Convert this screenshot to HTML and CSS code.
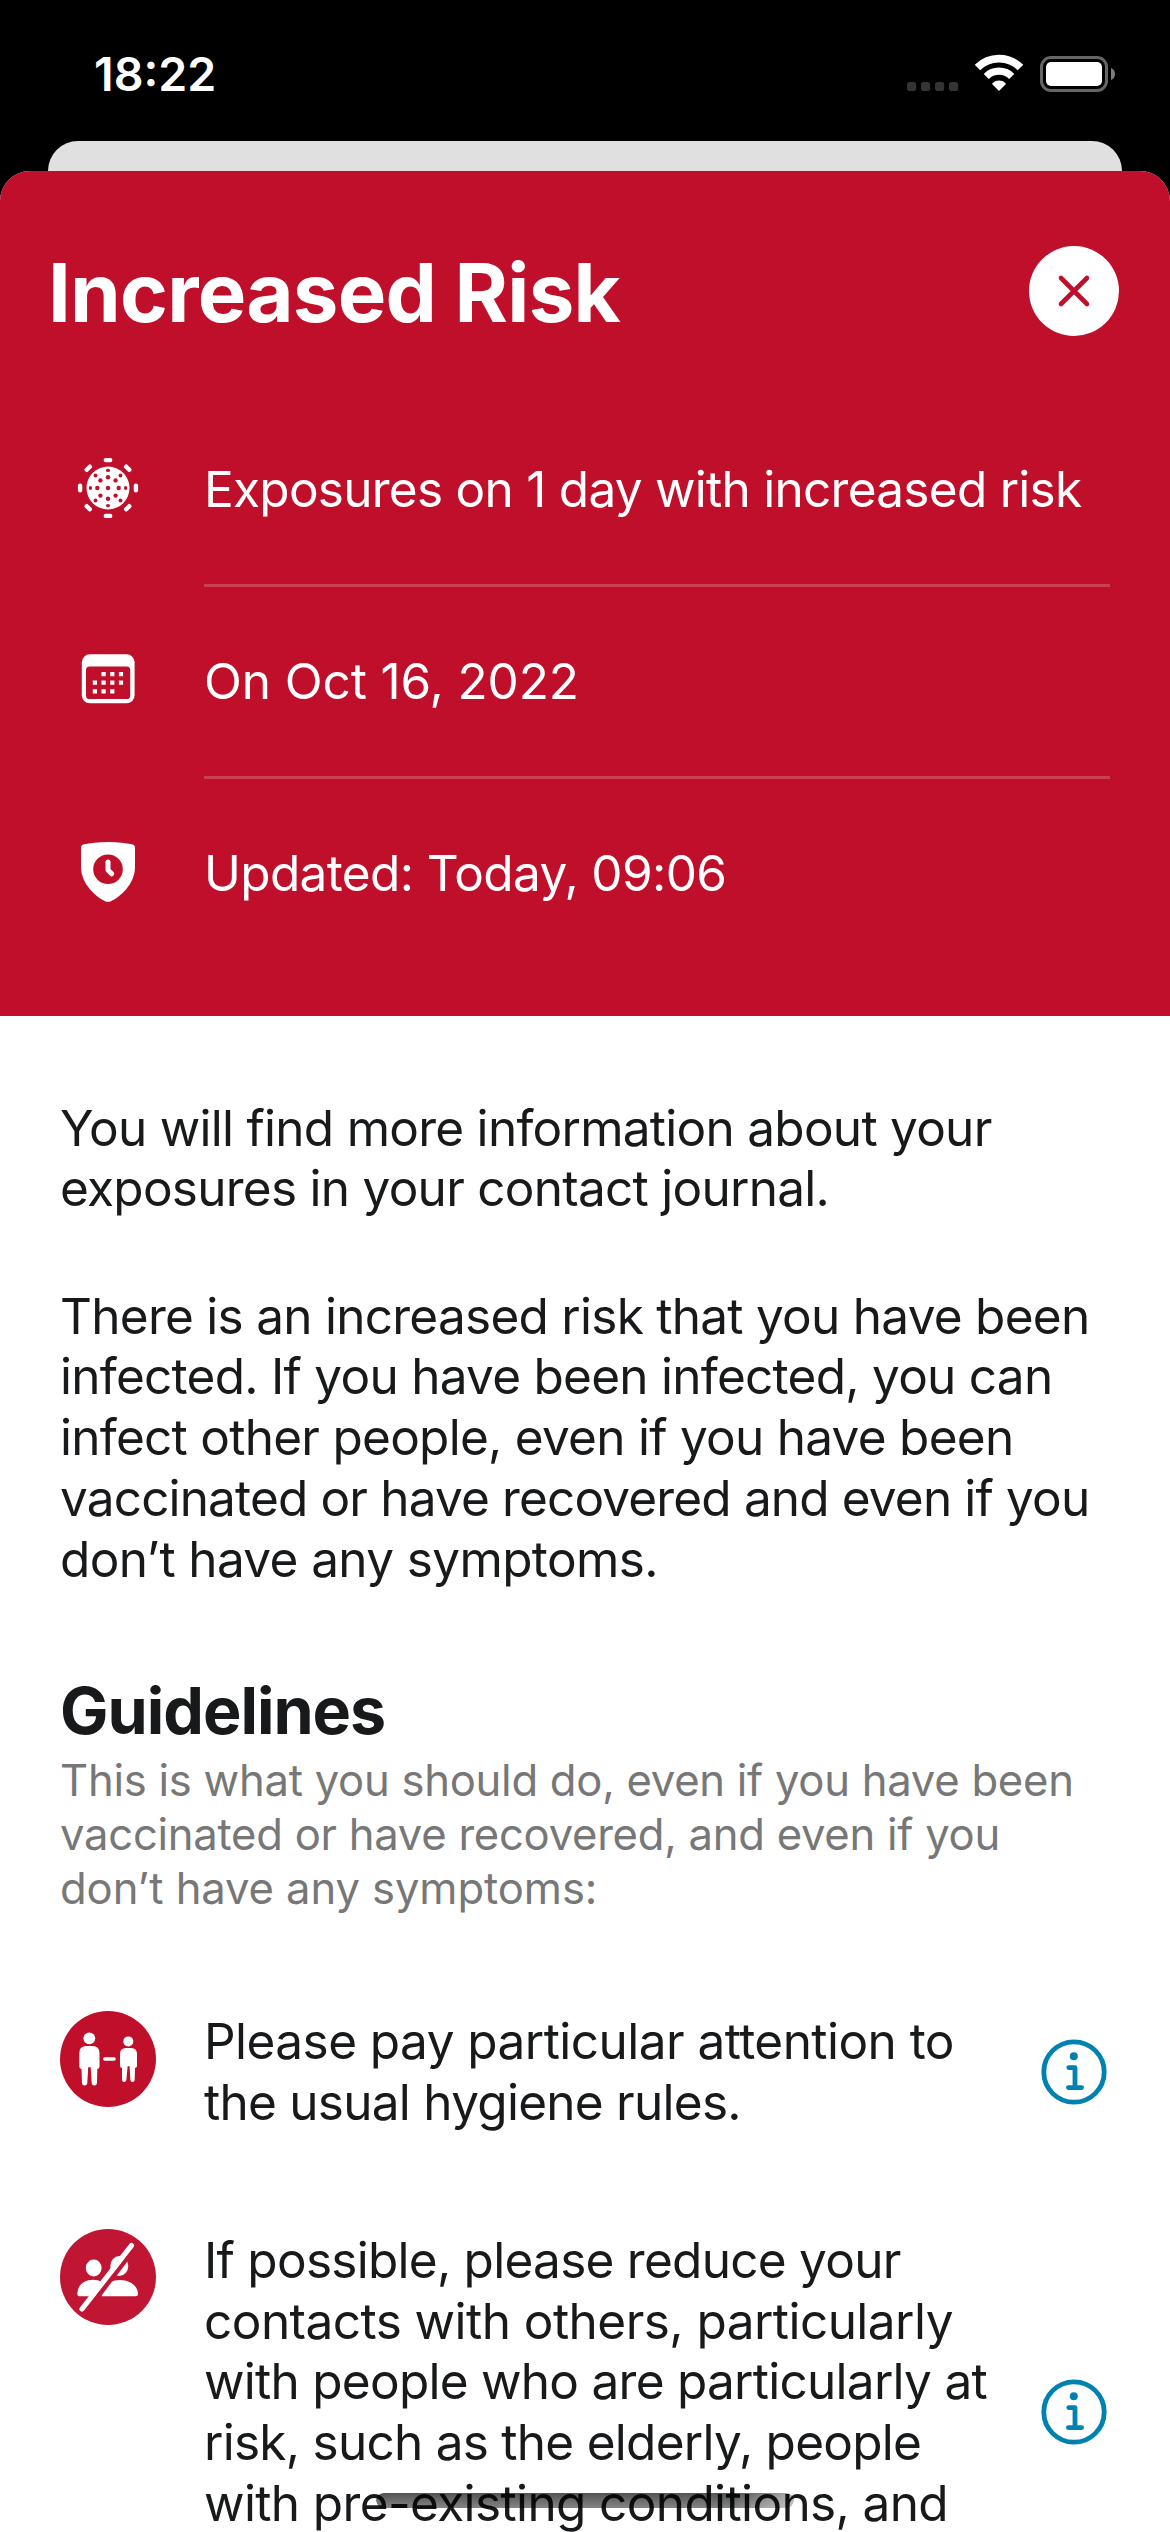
FILE: index.html
```html
<!DOCTYPE html>
<html lang="en">
<head>
<meta charset="utf-8">
<title>Increased Risk</title>
<link rel="stylesheet" href="styles.css">
</head>
<body>
<div class="screen">
  <header class="status">
    <span class="time">18:22</span>
    <svg class="status-icons" viewBox="905 54 212 39">
      <g fill="#343436">
        <rect x="907" y="82" width="9.2" height="9" rx="2.8"/><rect x="921" y="82" width="9.2" height="9" rx="2.8"/><rect x="935" y="82" width="9.2" height="9" rx="2.8"/><rect x="949" y="82" width="9.2" height="9" rx="2.8"/>
      </g>
      <g fill="none" stroke="#fff">
        <path stroke-width="7.8" d="M977.5 67.6A30.4 30.4 0 0 1 1020.5 67.6"/>
        <path stroke-width="7.3" d="M986.3 76.5A17.9 17.9 0 0 1 1011.7 76.5"/>
      </g>
      <path fill="#fff" d="M999 91L992.3 84.2Q991.9 83.6 992.6 83A9.5 9.5 0 0 1 1005.4 83Q1006.1 83.6 1005.7 84.2Z"/>
      <rect x="1041.5" y="57.5" width="65" height="33" rx="9.5" fill="none" stroke="#666" stroke-width="3"/>
      <rect x="1046" y="62" width="56" height="24" rx="5" fill="#fff"/>
      <path fill="#7c7c7c" d="M1111 68Q1115 69.5 1115 74T1111 80Z"/>
    </svg>
  </header>
  <div class="back-card"></div>
  <main class="sheet">
    <section class="hero">
      <div class="title-row">
        <h1>Increased Risk</h1>
        <button class="close" aria-label="Close"><svg viewBox="0 0 90 90"><path d="M32 32L58 58M58 32L32 58" stroke="#c00f2a" stroke-width="4.6" stroke-linecap="round"/></svg></button>
      </div>
      <div class="fact">
        <svg viewBox="0 0 96 96">
          <circle cx="48" cy="48" r="21.5" fill="#fff"/>
          <g stroke="#fff" stroke-width="4.4" stroke-linecap="round">
            <path d="M45.8 20.1h4.4M45.8 75.9h4.4M20.1 45.8v4.4M75.9 45.8v4.4M26.7 29.8l3.1-3.1M66.2 26.7l3.1 3.1M26.7 66.2l3.1 3.1M66.2 69.3l3.1-3.1"/>
          </g>
          <g fill="#c00f2a">
            <circle cx="48" cy="48" r="2.2"/>
            <circle cx="48" cy="37.3" r="2.2"/><circle cx="48" cy="58.7" r="2.2"/><circle cx="37.3" cy="48" r="2.2"/><circle cx="58.7" cy="48" r="2.2"/>
            <circle cx="40.4" cy="40.4" r="2.2"/><circle cx="55.6" cy="40.4" r="2.2"/><circle cx="40.4" cy="55.6" r="2.2"/><circle cx="55.6" cy="55.6" r="2.2"/>
            <ellipse cx="48" cy="30.4" rx="2.1" ry="1.6"/><ellipse cx="48" cy="65.6" rx="2.1" ry="1.6"/><ellipse cx="30.4" cy="48" rx="1.6" ry="2.1"/><ellipse cx="65.6" cy="48" rx="1.6" ry="2.1"/>
            <circle cx="35.5" cy="35.5" r="1.9"/><circle cx="60.5" cy="35.5" r="1.9"/><circle cx="35.5" cy="60.5" r="1.9"/><circle cx="60.5" cy="60.5" r="1.9"/>
          </g>
        </svg>
        <p class="ls-7">Exposures on 1 day with increased risk</p>
      </div>
      <div class="fact">
        <svg viewBox="0 0 96 96">
          <rect x="21.8" y="22.3" width="52.8" height="49" rx="8" fill="#fff"/>
          <rect x="26" y="34.4" width="44.2" height="32.6" rx="3.6" fill="#c00f2a"/>
          <g stroke="#fff" stroke-width="4.2">
            <path stroke-dasharray="4.2 4.5" d="M41.5 42.1h22"/>
            <path stroke-dasharray="4.2 4.5" d="M32.8 50.7h31"/>
            <path stroke-dasharray="4.2 4.5" d="M32.8 59.3h22"/>
          </g>
        </svg>
        <p class="ls-1">On Oct 16, 2022</p>
      </div>
      <div class="fact">
        <svg viewBox="0 0 96 96">
          <path fill="#fff" d="M48 18C58 18 66 19 72 20.3Q75 21 75 24V43C75 60 60 73 51 77.2Q48 78.5 45 77.2C36 73 21 60 21 43V24Q21 21 24 20.3C30 19 38 18 48 18Z"/>
          <circle cx="48" cy="45.3" r="14.8" fill="#c00f2a"/>
          <path fill="none" stroke="#fff" stroke-width="5" stroke-linecap="round" stroke-linejoin="round" d="M48 38V46L51.7 49.8"/>
        </svg>
        <p class="ls-6">Updated: Today, 09:06</p>
      </div>
    </section>
    <section class="content">
      <p><span class="ls-7">You will find more information about your</span><span class="ls-7">exposures in your contact journal.</span></p>
      <p><span class="ls-7">There is an increased risk that you have been</span><span class="ls-7">infected. If you have been infected, you can</span><span class="ls-7">infect other people, even if you have been</span><span class="ls-8">vaccinated or have recovered and even if you</span><span class="ls-6">don’t have any symptoms.</span></p>
      <h2>Guidelines</h2>
      <p class="sub"><span>This is what you should do, even if you have been</span><span>vaccinated or have recovered, and even if you</span><span class="ls-1">don’t have any symptoms:</span></p>
      <ul>
        <li>
          <svg class="badge" viewBox="0 0 96 96">
            <circle cx="48" cy="48" r="48" fill="#c00f2a"/>
            <g fill="#fff">
              <circle cx="29.3" cy="27.3" r="5.9"/>
              <path d="M26.5 35h5.8q7.2 0 7.2 7.2V55.4q0 2.2-2.2 2.6L37 71.8q-.2 2.7-2.7 2.7t-2.6-2.7L30.7 56.2h-2.5L27.3 71.8q-.2 2.7-2.7 2.7T22 71.8L21.5 58q-2.2-.4-2.2-2.6V42.2q0-7.2 7.2-7.2Z"/>
              <circle cx="68.3" cy="30.4" r="5"/>
              <path d="M66 37.1h5q6 0 6 6V54.7q0 2-2 2.3L74.7 68.8q-.2 2.2-2.2 2.2t-2.2-2.2L69.6 55.2h-2L66.4 68.8q-.2 2.2-2.2 2.2T62 68.8L62 57q-2-.3-2-2.3V43.1q0-6 6-6Z"/>
              <rect x="43" y="46.2" width="12.8" height="3.6" rx="1.8"/>
            </g>
          </svg>
          <p><span class="ls-5">Please pay particular attention to</span><span class="ls-7">the usual hygiene rules.</span></p>
          <svg class="info" viewBox="0 0 66 66"><circle cx="33" cy="33" r="30.2"/><circle class="dot" cx="32.8" cy="17.2" r="4"/><path d="M27.8 28.6H34V48.6M27.4 48.6H40.6"/></svg>
        </li>
        <li class="long">
          <svg class="badge" viewBox="0 0 96 96">
            <circle cx="48" cy="48" r="48" fill="#c01634"/>
            <g fill="#fff">
              <ellipse cx="33.7" cy="39" rx="7.9" ry="8.5"/>
              <path d="M17.4 65C17.4 56 24 50.8 33 50.8Q38 50.8 42 53L34 67.3H20Q17.4 67.3 17.4 65Z"/>
              <ellipse cx="59.3" cy="37" rx="9" ry="10"/>
              <path d="M41.6 67.3V64C42.5 57 51 51 59.8 51C70 51 78 57 78 65Q78 67.3 75.4 67.3Z"/>
            </g>
            <path stroke="#c01634" stroke-width="4.4" d="M72.4 22.3L36.2 69.8"/>
            <path stroke="#fff" stroke-width="5.2" stroke-linecap="round" d="M71.4 16.6L22 80"/>
          </svg>
          <p><span class="ls-7">If possible, please reduce your</span><span class="ls-5">contacts with others, particularly</span><span class="ls-7">with people who are particularly at</span><span class="ls-7">risk, such as the elderly, people</span><span class="ls-6">with pre-existing conditions, and</span></p>
          <svg class="info" viewBox="0 0 66 66"><circle cx="33" cy="33" r="30.2"/><circle class="dot" cx="32.8" cy="17.2" r="4"/><path d="M27.8 28.6H34V48.6M27.4 48.6H40.6"/></svg>
        </li>
      </ul>
    </section>
  </main>
  <div class="home-bar"></div>
</div>
</body>
</html>
```
FILE: styles.css
```css
* { box-sizing: border-box; margin: 0; padding: 0; }
body { background: #000; }
.screen {
  position: relative;
  width: 1170px;
  height: 2532px;
  overflow: hidden;
  background: #000;
  color: #17191a;
  font: 400 49.5px/60.75px Inter, "Liberation Sans", sans-serif;
  white-space: nowrap;
}
svg { display: block; flex: none; }

.status {
  height: 141px;
  padding: 44px 53px 0 94px;
  display: flex;
  justify-content: space-between;
  align-items: flex-start;
  color: #fff;
}
.time { font-size: 46.5px; font-weight: 600; line-height: 60px; }
.status-icons { width: 212px; height: 39px; margin-top: 10px; }

.back-card { height: 30px; margin: 0 48px; background: #e0e0e0; border-radius: 30px 30px 0 0; }
.sheet { height: 2361px; background: #fff; border-radius: 30px 30px 0 0; overflow: hidden; }

.hero { height: 845px; background: #c00f2a; color: #fff; padding: 72px 60px 0; }
.title-row { height: 152px; display: flex; justify-content: space-between; align-items: flex-start; margin: 0 -9px 0 -12px; }
h1 { font-size: 81.5px; line-height: 100px; font-weight: 700; letter-spacing: -0.77px; }
.close { width: 90px; height: 90px; margin-top: 3px; border: 0; border-radius: 50%; background: #fff; }
.close svg { width: 90px; height: 90px; }
.fact { height: 192px; display: flex; gap: 48px; }
.fact svg { width: 96px; height: 96px; margin-top: 45px; }
.fact p { width: 906px; line-height: 60px; padding-top: 64px; border-bottom: 3px solid #cd3f55; }
.fact:last-child p { border-bottom: 0; }

.content { padding: 81.5px 60px 0; }
.content span { display: block; }
.content > p + p { margin-top: 66.5px; }
h2 { margin-top: 83px; font-size: 64.6px; line-height: 78px; letter-spacing: -1px; font-weight: 700; }
.content > .sub { margin-top: 3.5px; font-size: 43.6px; line-height: 54px; letter-spacing: -0.26px; color: #777; }

ul { list-style: none; margin-top: 95.5px; display: flex; flex-direction: column; gap: 96.5px; }
li { display: flex; align-items: flex-start; }
li p { width: 837px; margin-left: 48px; min-height: 121.5px; }
.long p { min-height: 366px; padding-top: 0.5px; }
.badge { width: 96px; height: 96px; }
.info { width: 66px; height: 66px; align-self: center; fill: none; stroke: #0082b0; stroke-width: 4.8; stroke-linecap: round; stroke-linejoin: round; }
.info .dot { fill: #0082b0; stroke: none; }

.ls-1 { letter-spacing: -0.1px; }
.ls-5 { letter-spacing: -0.54px; }
.ls-6 { letter-spacing: -0.62px; }
.ls-7 { letter-spacing: -0.73px; }
.ls-8 { letter-spacing: -0.84px; }

.home-bar {
  position: absolute;
  left: 376px;
  top: 2493px;
  width: 418px;
  height: 15px;
  border-radius: 8px;
  background: linear-gradient(rgba(0, 0, 0, .68), rgba(0, 0, 0, .48));
  -webkit-mask-image: linear-gradient(90deg, #000 86%, rgba(0, 0, 0, .45));
  mask-image: linear-gradient(90deg, #000 86%, rgba(0, 0, 0, .45));
}
```
